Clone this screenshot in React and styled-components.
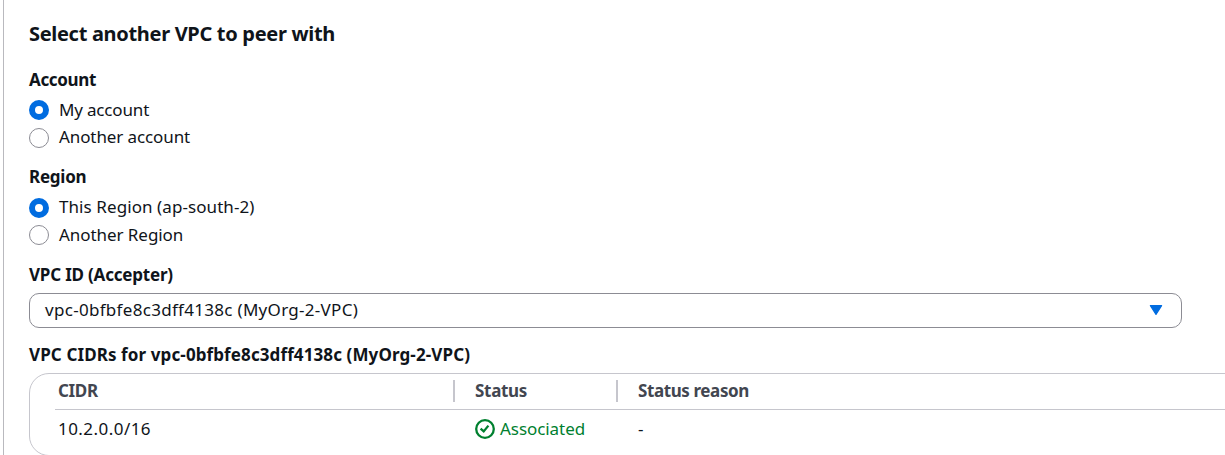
import React from "react";
import styled, { createGlobalStyle } from "styled-components";

const GlobalStyle = createGlobalStyle`
  *, *::before, *::after { box-sizing: border-box; }
  body {
    margin: 0;
    background: #fff;
    color: #0f141a;
    font-family: "Noto Sans", "Open Sans", sans-serif;
    font-size: 17px;
    line-height: 24px;
    overflow: hidden;
  }
`;

const Panel = styled.main`
  height: 455px;
  margin-left: 3px;
  padding: 22px 0 0 25px;
  border-left: 1px solid #b9b9be;
  overflow: hidden;
`;

const Text = styled.span`
  letter-spacing: ${(p) => p.$track || 0}px;
  white-space: nowrap;
`;

const Title = styled.h2`
  margin: 0 0 22px;
  font-size: 20px;
  line-height: 24px;
  font-weight: 700;
`;

const Field = styled.section`
  margin-bottom: ${(p) => p.$gap}px;
`;

const Label = styled.div`
  height: 24px;
  margin-bottom: ${(p) => p.$gap}px;
  font-weight: 700;
`;

const Option = styled.label`
  display: flex;
  align-items: flex-start;
  gap: 10px;
  height: ${(p) => p.$height}px;
`;

const OptionText = styled(Text)`
  padding-top: ${(p) => p.$top}px;
`;

const Radio = styled.span`
  flex: none;
  width: 20px;
  height: 20px;
  margin-top: 4px;
  border-radius: 50%;
  border: ${(p) => (p.$checked ? "6px solid #006ce0" : "1px solid #8c8c94")};
  background: #fff;
`;

const Select = styled.div`
  display: flex;
  align-items: center;
  justify-content: space-between;
  width: 1153px;
  height: 35px;
  padding: 0 18px 1px 15px;
  border: 1px solid #8c8c94;
  border-radius: 10px;
`;

const Table = styled.div`
  width: 1230px;
  height: 83px;
  padding: 0 0 0 25px;
  border: 1px solid #c6c6cd;
  border-radius: 20px;
`;

const Row = styled.div`
  display: grid;
  grid-template-columns: 400px 163px 1fr;
  align-items: start;
  height: ${(p) => (p.$head ? 36 : 39)}px;
  padding-top: ${(p) => (p.$head ? 6 : 8)}px;
  border-bottom: ${(p) => (p.$head ? "1px solid #c6c6cd" : "none")};
`;

const Cell = styled.div`
  display: flex;
  align-items: center;
  gap: 5px;
  height: 22px;
  padding-left: ${(p) => (p.$first ? 3 : 20)}px;
  color: ${(p) => (p.$green ? "#00802f" : "inherit")};
`;

const HeadCell = styled(Cell)`
  margin-left: ${(p) => (p.$first ? 0 : -2)}px;
  border-left: ${(p) => (p.$first ? "none" : "2px solid #c6c6cd")};
  color: #424650;
  font-weight: 700;
`;

const Caret = () => (
  <svg width="14" height="12" viewBox="0 0 14 12" aria-hidden="true">
    <path d="M1.4 1.6h11.2L7 10.4z" fill="#006ce0" stroke="#006ce0" strokeWidth="1.2" strokeLinejoin="round" />
  </svg>
);

const SuccessIcon = () => (
  <svg width="20" height="20" viewBox="0 0 20 20" fill="none" stroke="#00802f" strokeWidth="2.3" aria-hidden="true">
    <circle cx="10" cy="10" r="8.8" />
    <path d="m5.6 9.6 3.1 2.8 4.7-5.8" />
  </svg>
);

const Choice = ({ checked, height, track, children }) => (
  <Option $height={height}>
    <Radio $checked={checked} />
    <OptionText $track={track} $top={height - 26}>{children}</OptionText>
  </Option>
);

export default function App() {
  return (
    <>
      <GlobalStyle />
      <Panel>
        <Title><Text $track={-0.31}>Select another VPC to peer with</Text></Title>
        <Field $gap={14}>
          <Label $gap={4}><Text $track={-0.35}>Account</Text></Label>
          <Choice checked height={28} track={-0.17}>My account</Choice>
          <Choice height={27} track={-0.1}>Another account</Choice>
        </Field>
        <Field $gap={14}>
          <Label $gap={5}><Text $track={-0.25}>Region</Text></Label>
          <Choice checked height={27} track={0.08}>This Region (ap-south-2)</Choice>
          <Choice height={28} track={-0.06}>Another Region</Choice>
        </Field>
        <Field $gap={15}>
          <Label $gap={6}><Text $track={-0.2}>VPC ID (Accepter)</Text></Label>
          <Select>
            <Text $track={0.3}>vpc-0bfbfe8c3dff4138c (MyOrg-2-VPC)</Text>
            <Caret />
          </Select>
        </Field>
        <Field $gap={0}>
          <Label $gap={6}><Text $track={0.11}>VPC CIDRs for vpc-0bfbfe8c3dff4138c (MyOrg-2-VPC)</Text></Label>
          <Table>
            <Row $head>
              <HeadCell $first><Text $track={-0.35}>CIDR</Text></HeadCell>
              <HeadCell><Text $track={-0.3}>Status</Text></HeadCell>
              <HeadCell><Text $track={-0.4}>Status reason</Text></HeadCell>
            </Row>
            <Row>
              <Cell $first><Text $track={0.45}>10.2.0.0/16</Text></Cell>
              <Cell $green><SuccessIcon /><Text $track={-0.06}>Associated</Text></Cell>
              <Cell><Text>-</Text></Cell>
            </Row>
          </Table>
        </Field>
      </Panel>
    </>
  );
}
